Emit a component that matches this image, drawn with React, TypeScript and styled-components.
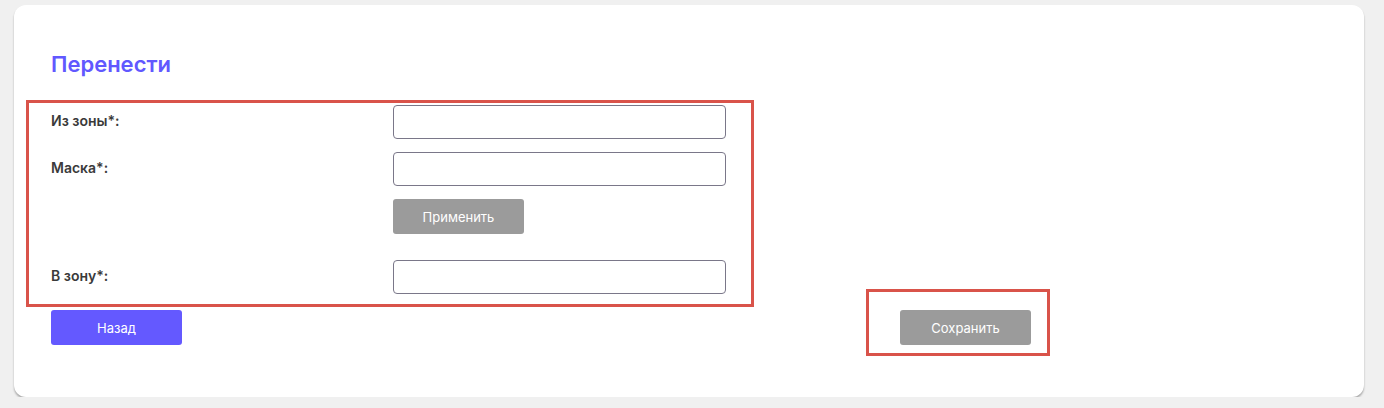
import React from 'react';
import styled, { createGlobalStyle } from 'styled-components';

const GlobalStyle = createGlobalStyle`
  html, body {
    margin: 0;
    padding: 0;
    background: #f0f0f0;
    font-family: Inter, "Noto Sans", sans-serif;
  }
`;

const Page = styled.div`
  padding: 5px 20px 0 14px;
`;

const Card = styled.div`
  background: #fff;
  border-radius: 12px;
  box-shadow: 0 2px 2px rgba(0, 0, 0, 0.3);
  height: 392px;
  box-sizing: border-box;
  padding: 45px 37px 0;
`;

const Title = styled.h2`
  margin: 0;
  font-size: 22px;
  line-height: 28px;
  font-weight: 600;
  color: #6158ff;
`;

const FormArea = styled.div`
  position: relative;
  margin-top: 27px;
  width: 675px;
  display: grid;
  grid-template-columns: 342px 333px;
  row-gap: 13px;
`;

const Highlight = styled.div<{ $top: number; $right: number; $bottom: number; $left: number }>`
  position: absolute;
  top: ${p => p.$top}px;
  right: ${p => p.$right}px;
  bottom: ${p => p.$bottom}px;
  left: ${p => p.$left}px;
  border: 3px solid #d9534a;
  pointer-events: none;
`;

const Label = styled.label`
  padding-top: 6px;
  font-size: 14px;
  line-height: 20px;
  font-weight: 600;
  color: #3a3a3a;
`;

const Input = styled.input`
  box-sizing: border-box;
  width: 333px;
  height: 34px;
  border: 1px solid #7a7789;
  border-radius: 4px;
  background: #fff;
  margin: 0;
`;

const Button = styled.button<{ $primary?: boolean }>`
  width: 131px;
  height: 35px;
  border: none;
  border-radius: 3px;
  background: ${p => (p.$primary ? '#6459ff' : '#9b9b9b')};
  color: #fff;
  font-family: Inter, "Noto Sans", sans-serif;
  font-size: 13px;
  cursor: pointer;
  padding: 0;
`;

const ApplyCell = styled.div`
  grid-column: 2;
  margin-bottom: 13px;
`;

const Actions = styled.div`
  display: flex;
  align-items: flex-start;
  margin-top: 16px;
`;

const SaveWrap = styled.div`
  position: relative;
  margin-left: 718px;
`;

export default function App() {
  return (
    <Page>
      <GlobalStyle />
      <Card>
        <Title>Перенести</Title>
        <FormArea>
          <Label htmlFor="from">Из зоны*:</Label>
          <Input id="from" type="text" />
          <Label htmlFor="mask">Маска*:</Label>
          <Input id="mask" type="text" />
          <ApplyCell>
            <Button type="button">Применить</Button>
          </ApplyCell>
          <Label htmlFor="to">В зону*:</Label>
          <Input id="to" type="text" />
          <Highlight $top={-5} $right={-28} $bottom={-13} $left={-25} />
        </FormArea>
        <Actions>
          <Button type="button" $primary>Назад</Button>
          <SaveWrap>
            <Button type="button">Сохранить</Button>
            <Highlight $top={-21} $right={-19} $bottom={-11} $left={-34} />
          </SaveWrap>
        </Actions>
      </Card>
    </Page>
  );
}
